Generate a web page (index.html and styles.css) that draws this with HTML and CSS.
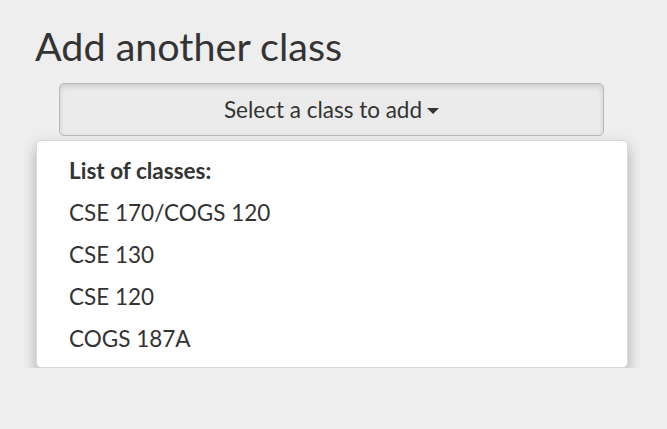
FILE: index.html
```html
<!DOCTYPE html>
<html>
<head>
<meta charset="utf-8">
<link rel="stylesheet" href="styles.css">
</head>
<body>
<div class="page">
  <h1 class="title">Add another class</h1>
  <div class="dropdown">
    <button class="toggle">Select a class to add <span class="caret"></span></button>
    <ul class="menu">
      <li class="header">List of classes:</li>
      <li class="item">CSE 170/COGS 120</li>
      <li class="item">CSE 130</li>
      <li class="item">CSE 120</li>
      <li class="item">COGS 187A</li>
    </ul>
  </div>
</div>
</body>
</html>
```

FILE: styles.css
```css
html, body {
  margin: 0;
  padding: 0;
  background: #eeeeee;
  font-family: Lato, "Open Sans", sans-serif;
  color: #333333;
}
.page {
  padding: 20px 0 0 36px;
  width: 592px;
}
.title {
  margin: 0 0 0 -1px;
  font-size: 39.5px;
  font-weight: 400;
  line-height: 52px;
  height: 63px;
}
.dropdown {
  display: flex;
  flex-direction: column;
}
.toggle {
  margin-left: 23px;
  width: 545px;
  height: 53px;
  border: 1px solid #b9b9b9;
  border-radius: 5px;
  background: #ebebeb;
  box-shadow: inset 0 3px 5px rgba(0,0,0,0.125);
  font-family: Lato, sans-serif;
  font-size: 22.5px;
  color: #333333;
  padding: 0;
  display: flex;
  align-items: center;
  justify-content: center;
  gap: 5px;
}
.caret {
  display: inline-block;
  width: 0;
  height: 0;
  border-top: 6px solid #333;
  border-left: 6px solid transparent;
  border-right: 6px solid transparent;
  margin-top: 3px;
}
.menu {
  list-style: none;
  margin: 4px 0 0 0;
  padding: 9px 0 7px 0;
  background: #fff;
  border: 1px solid rgba(0,0,0,0.15);
  border-radius: 5px;
  box-shadow: 0 6px 14px rgba(0,0,0,0.28);
}
.menu li {
  padding: 0 32px;
  font-size: 22.5px;
  line-height: 42px;
}
.header {
  font-weight: 700;
}
```
